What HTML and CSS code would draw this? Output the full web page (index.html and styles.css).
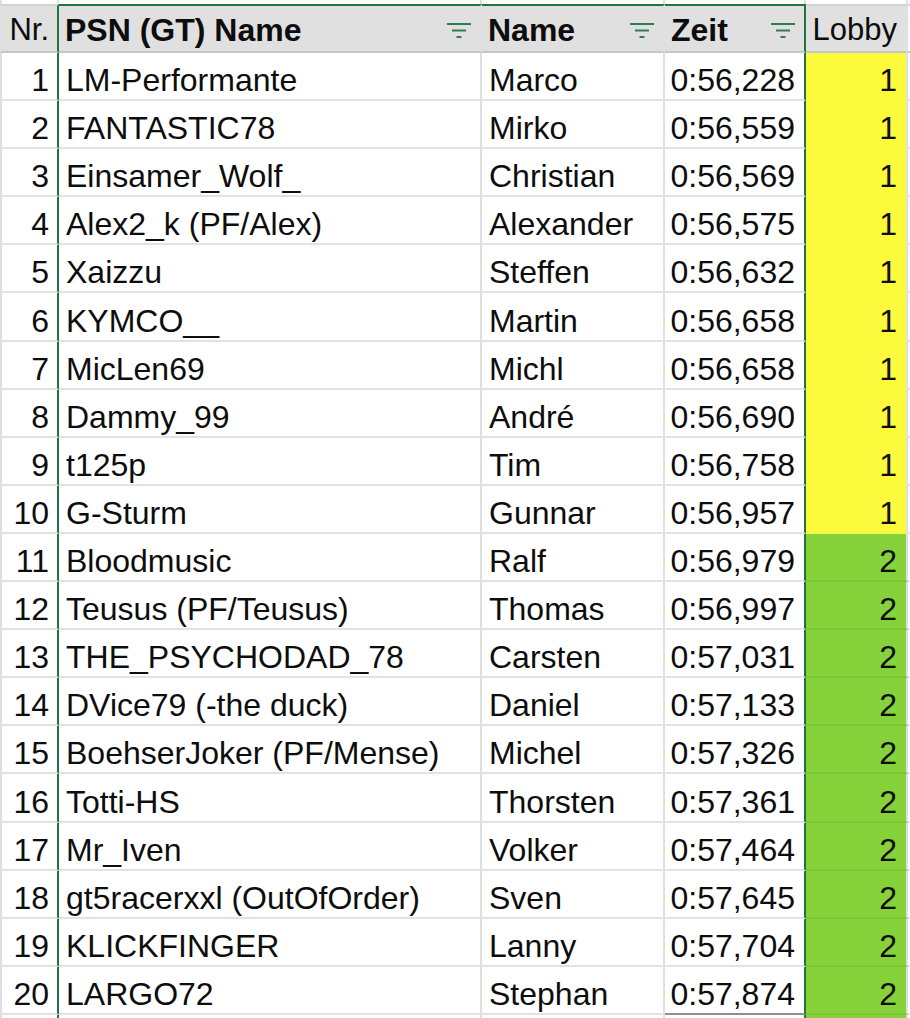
FILE: index.html
```html
<!DOCTYPE html>
<html lang="de">
<head>
<meta charset="utf-8">
<title>Lobby-Einteilung</title>
<link rel="stylesheet" href="styles.css">
</head>
<body>
<div class="sheet">
  <div class="row ghost">
    <div class="c nr"></div><div class="c psn"></div><div class="c name"></div><div class="c zeit"></div><div class="c lobby"></div><div class="c rest"></div>
  </div>
  <div class="row head">
    <div class="c nr plain">Nr.</div>
    <div class="c psn sel"><span class="h">PSN (GT) Name</span><svg class="filter" viewBox="0 0 24 16" width="24" height="16"><path d="M0 2h24M5 8.5h14M9.5 15h5"/></svg></div>
    <div class="c name sel"><span class="h">Name</span><svg class="filter" viewBox="0 0 24 16" width="24" height="16"><path d="M0 2h24M5 8.5h14M9.5 15h5"/></svg></div>
    <div class="c zeit sel"><span class="h">Zeit</span><svg class="filter" viewBox="0 0 24 16" width="24" height="16"><path d="M0 2h24M5 8.5h14M9.5 15h5"/></svg></div>
    <div class="c lobby plain">Lobby</div>
    <div class="c rest"></div>
  </div>

  <div class="row"><div class="c nr">1</div><div class="c psn">LM-Performante</div><div class="c name">Marco</div><div class="c zeit">0:56,228</div><div class="c lobby l1">1</div><div class="c rest"></div></div>
  <div class="row"><div class="c nr">2</div><div class="c psn">FANTASTIC78</div><div class="c name">Mirko</div><div class="c zeit">0:56,559</div><div class="c lobby l1">1</div><div class="c rest"></div></div>
  <div class="row"><div class="c nr">3</div><div class="c psn">Einsamer_Wolf_</div><div class="c name">Christian</div><div class="c zeit">0:56,569</div><div class="c lobby l1">1</div><div class="c rest"></div></div>
  <div class="row"><div class="c nr">4</div><div class="c psn">Alex2_k (PF/Alex)</div><div class="c name">Alexander</div><div class="c zeit">0:56,575</div><div class="c lobby l1">1</div><div class="c rest"></div></div>
  <div class="row"><div class="c nr">5</div><div class="c psn">Xaizzu</div><div class="c name">Steffen</div><div class="c zeit">0:56,632</div><div class="c lobby l1">1</div><div class="c rest"></div></div>
  <div class="row"><div class="c nr">6</div><div class="c psn">KYMCO__</div><div class="c name">Martin</div><div class="c zeit">0:56,658</div><div class="c lobby l1">1</div><div class="c rest"></div></div>
  <div class="row"><div class="c nr">7</div><div class="c psn">MicLen69</div><div class="c name">Michl</div><div class="c zeit">0:56,658</div><div class="c lobby l1">1</div><div class="c rest"></div></div>
  <div class="row"><div class="c nr">8</div><div class="c psn">Dammy_99</div><div class="c name">André</div><div class="c zeit">0:56,690</div><div class="c lobby l1">1</div><div class="c rest"></div></div>
  <div class="row"><div class="c nr">9</div><div class="c psn">t125p</div><div class="c name">Tim</div><div class="c zeit">0:56,758</div><div class="c lobby l1">1</div><div class="c rest"></div></div>
  <div class="row"><div class="c nr">10</div><div class="c psn">G-Sturm</div><div class="c name">Gunnar</div><div class="c zeit">0:56,957</div><div class="c lobby l1">1</div><div class="c rest"></div></div>
  <div class="row"><div class="c nr">11</div><div class="c psn">Bloodmusic</div><div class="c name">Ralf</div><div class="c zeit">0:56,979</div><div class="c lobby l2">2</div><div class="c rest"></div></div>
  <div class="row"><div class="c nr">12</div><div class="c psn">Teusus (PF/Teusus)</div><div class="c name">Thomas</div><div class="c zeit">0:56,997</div><div class="c lobby l2">2</div><div class="c rest"></div></div>
  <div class="row"><div class="c nr">13</div><div class="c psn">THE_PSYCHODAD_78</div><div class="c name">Carsten</div><div class="c zeit">0:57,031</div><div class="c lobby l2">2</div><div class="c rest"></div></div>
  <div class="row"><div class="c nr">14</div><div class="c psn">DVice79 (-the duck)</div><div class="c name">Daniel</div><div class="c zeit">0:57,133</div><div class="c lobby l2">2</div><div class="c rest"></div></div>
  <div class="row"><div class="c nr">15</div><div class="c psn">BoehserJoker (PF/Mense)</div><div class="c name">Michel</div><div class="c zeit">0:57,326</div><div class="c lobby l2">2</div><div class="c rest"></div></div>
  <div class="row"><div class="c nr">16</div><div class="c psn">Totti-HS</div><div class="c name">Thorsten</div><div class="c zeit">0:57,361</div><div class="c lobby l2">2</div><div class="c rest"></div></div>
  <div class="row"><div class="c nr">17</div><div class="c psn">Mr_Iven</div><div class="c name">Volker</div><div class="c zeit">0:57,464</div><div class="c lobby l2">2</div><div class="c rest"></div></div>
  <div class="row"><div class="c nr">18</div><div class="c psn">gt5racerxxl (OutOfOrder)</div><div class="c name">Sven</div><div class="c zeit">0:57,645</div><div class="c lobby l2">2</div><div class="c rest"></div></div>
  <div class="row"><div class="c nr">19</div><div class="c psn">KLICKFINGER</div><div class="c name">Lanny</div><div class="c zeit">0:57,704</div><div class="c lobby l2">2</div><div class="c rest"></div></div>
  <div class="row"><div class="c nr">20</div><div class="c psn">LARGO72</div><div class="c name">Stephan</div><div class="c zeit last">0:57,874</div><div class="c lobby l2">2</div><div class="c rest"></div></div>
  <div class="row"><div class="c nr"></div><div class="c psn"></div><div class="c name"></div><div class="c zeit"></div><div class="c lobby l2"></div><div class="c rest"></div></div>
</div>
</body>
</html>
```
FILE: styles.css
```css
html, body {
  margin: 0;
  padding: 0;
  background: #ffffff;
  overflow: hidden;
}

.sheet {
  font-family: "Liberation Sans", Arial, sans-serif;
  font-size: 32px;
  color: #0d0d0d;
  width: 910px;
}

.row {
  display: grid;
  grid-template-columns: 59px 423px 183px 141px 102px 1fr;
  height: 48.1px;
}

.c {
  box-sizing: border-box;
  display: flex;
  align-items: flex-end;
  line-height: 36px;
  padding: 0 7px 1px 7px;
  white-space: nowrap;
  border-right: 2px solid #dfdfdf;
  border-bottom: 2px solid #e2e2e2;
  min-width: 0;
  overflow: hidden;
}

.c.rest {
  border-right: none;
}

.c.nr {
  justify-content: flex-end;
  padding-right: 8px;
  border-left: 2px solid #dfdfdf;
  border-right: 2px solid #22743f;
}

.c.zeit {
  justify-content: flex-end;
  padding-right: 9px;
  border-right: 2px solid #22743f;
}

.c.zeit.last {
  border-bottom-color: #8f8f8f;
}

.c.lobby {
  justify-content: flex-end;
  padding-right: 9px;
}

.c.l1 {
  background: #fcfa3c;
  border-bottom-color: #fcfa3c;
}

.c.l2 {
  background: #86d23a;
  border-bottom-color: #7dc634;
}

/* thin white strip above the header (tail of the previous row) */
.row.ghost {
  height: 4px;
}

.row.ghost .c {
  border-bottom: none;
  padding: 0;
}

.row.ghost .c.nr,
.row.ghost .c.zeit {
  border-right-color: #dfdfdf;
}

/* header row */
.row.head {
  height: 49px;
}

.row.head .c {
  background: #e0e0e0;
  border-top: 2px solid #d2d2d2;
  border-bottom: 2px solid #c6c6c6;
  padding-bottom: 3px;
}

.row.head .c.rest {
  background: #ffffff;
}

.row.head .c.sel {
  border-top-color: #22743f;
  justify-content: space-between;
  padding-right: 9px;
  padding-left: 6px;
}

.row.head .c.plain {
  font-size: 31px;
}

.row.head .c.nr.plain {
  padding-right: 8px;
}

.h {
  font-weight: bold;
}

.filter {
  flex: none;
  align-self: flex-end;
  margin-bottom: 10px;
  fill: none;
  stroke: #2f7d4f;
  stroke-width: 1.8;
}
```
